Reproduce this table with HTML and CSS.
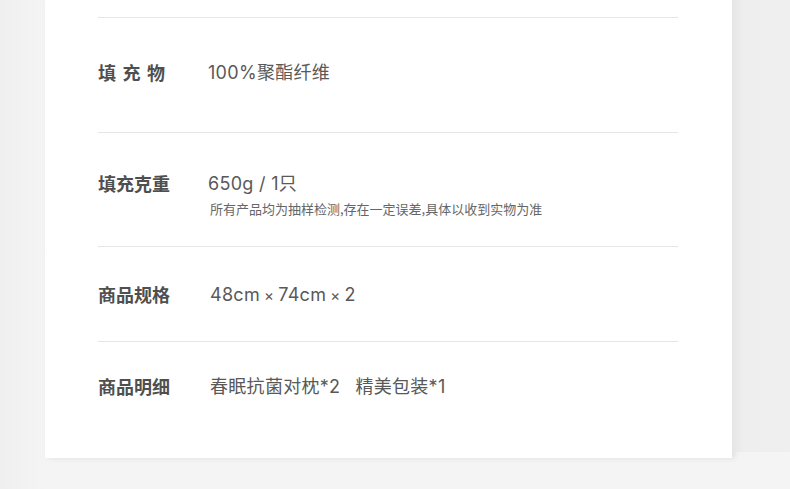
FILE: index.html
```html
<!DOCTYPE html>
<html lang="zh-CN">
<head>
  <meta charset="UTF-8" />
  <meta name="viewport" content="width=device-width, initial-scale=1" />
  <title>商品参数</title>
  <link rel="stylesheet" href="styles.css">
</head>
<body>

  <div class="page">
    <div class="card">
      <div class="row row-fill">
        <div class="label label-wide">填充物</div>
        <div class="value">100%聚酯纤维</div>
      </div>

      <div class="row row-weight">
        <div class="label">填充克重</div>
        <div class="value-box">
          <div class="value">650g / 1只</div>
          <div class="note">所有产品均为抽样检测,存在一定误差,具体以收到实物为准</div>
        </div>
      </div>

      <div class="row row-size">
        <div class="label">商品规格</div>
        <div class="value value-shift">48cm<span class="times">×</span>74cm<span class="times">×</span>2</div>
      </div>

      <div class="row row-list">
        <div class="label">商品明细</div>
        <div class="value value-shift">春眠抗菌对枕*2<span class="gap">精美包装*1</span></div>
      </div>
    </div>
    <div class="side"></div>
  </div>

</body>
</html>
```

FILE: styles.css
```css
* {
  box-sizing: border-box;
}

body {
  margin: 0;
  padding: 0;
  background: #f3f3f3;
  font-family: "Noto Sans CJK SC", "Noto Sans", sans-serif;
  color: #555;
}

.page {
  display: flex;
  padding-left: 45px;
  height: 489px;
  background: linear-gradient(90deg, #efefef, #f4f4f4 45px);
}

.card {
  width: 687px;
  height: 458px;
  background: #fff;
  padding: 17px 0 0 53px;
  box-shadow: 3px 0 6px rgba(0, 0, 0, 0.09);
}

.side {
  flex: 1;
  height: 452px;
  background: linear-gradient(90deg, #e6e6e6, #eeeeee 12px, #efefef);
}

.row {
  display: flex;
  align-items: flex-start;
  width: 580px;
  border-top: 1px solid #e6e6e6;
}

.row-fill {
  height: 115px;
  padding-top: 43px;
}

.row-weight {
  height: 114px;
  padding-top: 39px;
}

.row-size {
  height: 95px;
  padding-top: 36px;
}

.row-list {
  height: 116px;
  padding-top: 33px;
}

.label {
  width: 110px;
  flex-shrink: 0;
  font-size: 18px;
  line-height: 22px;
  font-weight: 700;
  color: #4f4f4f;
}

.label-wide {
  letter-spacing: 6.5px;
}

.value {
  font-family: Inter, "Noto Sans CJK SC", sans-serif;
  font-size: 18px;
  line-height: 24px;
  letter-spacing: 0.3px;
  color: #595959;
}

.value-shift {
  padding-left: 2px;
}

.times {
  margin: 0 4px;
  font-size: 15px;
}

.note {
  margin-top: 4px;
  padding-left: 2px;
  font-family: "Noto Sans CJK SC", sans-serif;
  font-size: 13px;
  line-height: 18px;
  letter-spacing: 0;
  color: #666;
}

.gap {
  margin-left: 15px;
}
```
